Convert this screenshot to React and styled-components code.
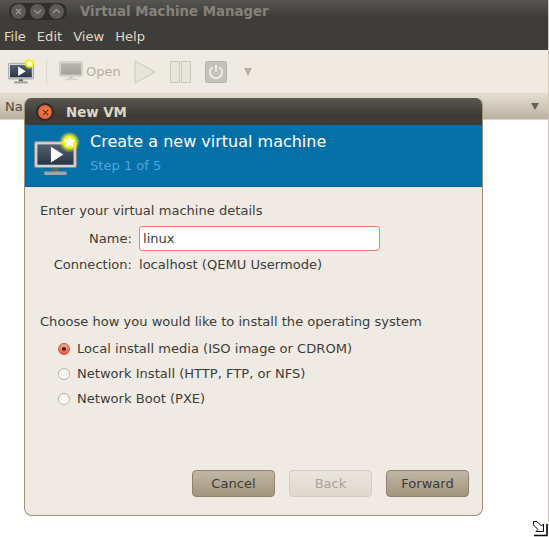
import React from "react";
import styled, { createGlobalStyle } from "styled-components";

const UI = `"DejaVu Sans", "Noto Sans", sans-serif`;
const BODY_SIZE = "13.07px";

const Global = createGlobalStyle`
  html, body { margin: 0; padding: 0; background: #fff; }
  body { font-family: ${UI}; font-size: ${BODY_SIZE}; color: #3c3b37; }
`;
const Desktop = styled.div`
  position: relative; width: 549px; height: 537px; overflow: hidden; background: #fff;
`;
const MainWindow = styled.div`
  display: flex; flex-direction: column; width: 549px; height: 521px;
  border-right: 1px solid #cfc6b4; box-sizing: border-box;
`;
const TitleBar = styled.div`
  height: 23px; display: flex; align-items: center; padding: 0 0 1px 9px; gap: 13px; box-sizing: border-box;
  background: linear-gradient(#575551, #3f3d39 70%);
`;
const WinButtons = styled.div`
  display: flex; align-items: center; gap: 4px; height: 17px; padding: 0 1px 0 2px; width: 58px; box-sizing: border-box;
  border-radius: 9px; background: #2f2e2b;
`;
const WinButton = styled.span`
  width: 15px; height: 15px; border-radius: 50%; background: #5d5b56; flex: none;
  display: flex; align-items: center; justify-content: center;
  svg { display: block; }
`;
const WinTitle = styled.div`
  font-weight: 700; font-size: 13.33px; color: #85827b;
`;
const MenuBar = styled.div`
  height: 27px; display: flex; align-items: center; padding-left: 4px; gap: 11px;
  background: #3f3d39; color: #dfd8c8; font-size: ${BODY_SIZE}; box-sizing: border-box;
`;
const Toolbar = styled.div`
  height: 44px; display: flex; align-items: center; background: #f0ebe2;
  border-bottom: 1px solid #e0d8ca; box-sizing: border-box; padding-left: 8px;
`;
const ToolSep = styled.div`
  width: 1px; height: 26px; background: #e3ddd1; margin: 0 12px 0 11px;
`;
const OpenLabel = styled.span`
  color: #b5ad9f; font-size: ${BODY_SIZE}; margin: 0 13px 0 3px;
`;
const ToolIcon = styled.span`
  display: flex; margin-right: ${p => p.$gap || 0}px;
  svg { display: block; }
`;
const HeaderRow = styled.div`
  height: 26px; display: flex; align-items: center; justify-content: space-between;
  padding: 0 8px 0 5px; box-sizing: border-box; color: #4c4a45; font-size: ${BODY_SIZE};
  background: linear-gradient(#e4ddd1, #bcb2a1); border-bottom: 1px solid #dcd5c8;
`;
const SortArrow = styled.span`
  width: 0; height: 0; border-left: 4px solid transparent; border-right: 4px solid transparent;
  border-top: 7px solid #66625a; margin-right: 1px;
`;
const ListArea = styled.div`
  flex: 1; background: #fff;
`;
const Dialog = styled.div`
  position: absolute; left: 24px; top: 98px; width: 459px; height: 418px;
  display: flex; flex-direction: column; box-sizing: border-box; overflow: hidden;
  border: 1px solid #9d917b; border-top: 0; border-radius: 7px 7px 8px 8px; background: #efebe4;
`;
const DialogTitle = styled.div`
  height: 27px; flex: none; display: flex; align-items: center; padding: 1px 0 0 11px; gap: 12px; box-sizing: border-box;
  background: linear-gradient(#5a5650, #3d3b37 65%);
`;
const CloseButton = styled.span`
  width: 14px; height: 14px; border-radius: 50%; border: 2px solid #2c2b28;
  background: radial-gradient(circle, #f08a60, #d9511f);
  display: flex; align-items: center; justify-content: center;
`;
const DialogName = styled.div`
  font-weight: 700; font-size: 13.33px; color: #dfd8c8;
`;
const Banner = styled.div`
  height: 62px; flex: none; display: flex; align-items: flex-start; background: #0570a8;
  padding: 0 0 0 9px; box-sizing: border-box; border-bottom: 1px solid #05608f;
`;
const BannerIcon = styled.div`
  width: 46px; height: 46px; margin: 7px 10px 0 0;
  svg { display: block; }
`;
const BannerText = styled.div`
  display: flex; flex-direction: column; padding-top: 6px;
`;
const BannerTitle = styled.div`
  color: #fff; font-size: 16px; line-height: 21px;
`;
const BannerStep = styled.div`
  color: #4fa3d8; font-size: ${BODY_SIZE}; line-height: 20px; margin-top: 4px;
`;
const Body = styled.div`
  flex: 1; display: flex; flex-direction: column; padding: 14px 15px 0 15px; position: relative;
`;
const Heading = styled.div`
  line-height: 20px; font-size: ${BODY_SIZE};
`;
const FormGrid = styled.div`
  display: grid; grid-template-columns: 92px 1fr; column-gap: 7px; row-gap: 1px; margin-top: 5px; align-items: center;
`;
const FieldLabel = styled.div`
  text-align: right; line-height: 20px; font-size: ${BODY_SIZE};
`;
const FieldValue = styled.div`
  line-height: 20px; height: 26px; display: flex; align-items: center; font-size: ${BODY_SIZE};
`;
const NameInput = styled.div`
  width: 241px; height: 25px; box-sizing: border-box; border: 1px solid #ee7f60; border-radius: 3px;
  background: #fff; padding-left: 3px; line-height: 23px; font-size: ${BODY_SIZE};
`;
const SecondHeading = styled(Heading)`
  margin-top: 34px;
`;
const RadioList = styled.div`
  display: flex; flex-direction: column; margin-top: 4px; padding-left: 18px;
`;
const RadioRow = styled.div`
  display: flex; align-items: center; height: 25px; gap: 7px; font-size: ${BODY_SIZE};
`;
const Radio = styled.span`
  width: 12px; height: 12px; border-radius: 50%; box-sizing: border-box; flex: none;
  display: flex; align-items: center; justify-content: center;
  border: 1px solid ${p => (p.$on ? "#c9553a" : "#b9b2a4")};
  background: ${p => (p.$on ? "linear-gradient(#f6a58c, #ea5f3f)" : "linear-gradient(#f4f2ee, #fff)")};
  &::after {
    content: ""; width: 4px; height: 4px; border-radius: 50%;
    background: ${p => (p.$on ? "#3c2a24" : "transparent")};
  }
`;
const Footer = styled.div`
  position: absolute; right: 13px; bottom: 18px; display: flex; gap: 14px;
`;
const Button = styled.div`
  width: 83px; height: 27px; box-sizing: border-box; border-radius: 4px; text-align: center;
  font-size: ${BODY_SIZE}; line-height: 26px;
  border: 1px solid ${p => (p.disabled ? "#d6cebf" : "#8f8370")};
  color: ${p => (p.disabled ? "#aaa499" : "#3c3b37")};
  background: ${p => (p.disabled ? "linear-gradient(#eae5dc, #dfd8cc)" : "linear-gradient(#c2b7a6, #a2957f)")};
`;
const Cursor = styled.svg`
  position: absolute; left: 532px; top: 520px; display: block;
`;
const SharedDefs = styled.svg`
  position: absolute; width: 0; height: 0;
`;

const Monitor = ({ disabled }) => (
  <>
    <rect x="0.5" y="0.5" width="37" height="23" rx="1.5" fill={disabled ? "#d8d6d0" : "#d3d5d6"} stroke={disabled ? "#c4c1ba" : "#8b8e90"} />
    <rect x="3" y="3" width="32" height="18" fill={disabled ? "url(#screen-off)" : "url(#screen-on)"} />
    {!disabled && <polygon points="15,5 15,19 26,12" fill="#fff" />}
    <rect x="16" y="24" width="6" height="3" fill={disabled ? "#c8c6c0" : "#62655f"} />
    <rect x="9" y="27" width="20" height="3" rx="1" fill={disabled ? "#d4d2cd" : "#a3a5a3"} />
  </>
);
const starPoints = (cx, cy, r) =>
  Array.from({ length: 10 }, (_, i) => {
    const a = -Math.PI / 2 + (i * Math.PI) / 5;
    const q = i % 2 ? r * 0.55 : r * 1.05;
    return `${(cx + q * Math.cos(a)).toFixed(2)},${(cy + q * Math.sin(a)).toFixed(2)}`;
  }).join(" ");
const Star = ({ cx, cy, r }) => (
  <>
    <circle cx={cx} cy={cy} r={r * 1.75} fill="url(#star-glow)" />
    <polygon fill="#fffff0" points={starPoints(cx, cy, r)} />
  </>
);
const Glyph = ({ d, c = "#a09d96" }) => (
  <svg width="9" height="9" viewBox="0 0 9 9">
    <path d={d} stroke={c} strokeWidth="1.2" fill="none" />
  </svg>
);

export default function App() {
  return (
    <Desktop>
      <Global />
      <SharedDefs aria-hidden="true">
        <defs>
          <linearGradient id="screen-on" x1="0" y1="0" x2="0" y2="1">
            <stop offset="0" stopColor="#55606f" />
            <stop offset="1" stopColor="#2a3548" />
          </linearGradient>
          <linearGradient id="screen-off" x1="0" y1="0" x2="0" y2="1">
            <stop offset="0" stopColor="#b8b6b0" />
            <stop offset="1" stopColor="#a4a29c" />
          </linearGradient>
          <radialGradient id="star-glow">
            <stop offset="0.55" stopColor="#f2f414" />
            <stop offset="1" stopColor="#e6e81c" stopOpacity="0" />
          </radialGradient>
        </defs>
      </SharedDefs>
      <MainWindow>
        <TitleBar>
          <WinButtons>
            <WinButton><Glyph d="M2 2 L7 7 M7 2 L2 7" /></WinButton>
            <WinButton><Glyph d="M1 3 L4.5 6.5 L8 3" /></WinButton>
            <WinButton><Glyph d="M1 6 L4.5 2.5 L8 6" /></WinButton>
          </WinButtons>
          <WinTitle>Virtual Machine Manager</WinTitle>
        </TitleBar>
        <MenuBar>
          <span>File</span><span>Edit</span><span>View</span><span>Help</span>
        </MenuBar>
        <Toolbar>
          <ToolIcon>
            <svg width="27" height="25" viewBox="0 0 27 25">
              <g transform="translate(0 4) scale(.68)"><Monitor /></g>
              <Star cx={21.5} cy={4.5} r={3.4} />
            </svg>
          </ToolIcon>
          <ToolSep />
          <ToolIcon>
            <svg width="24" height="21" viewBox="0 0 38 32"><Monitor disabled /></svg>
          </ToolIcon>
          <OpenLabel>Open</OpenLabel>
          <ToolIcon $gap={14}>
            <svg width="22" height="24" viewBox="0 0 22 24">
              <polygon points="1,1 1,23 21,12" fill="#e8e6da" stroke="#cbc9b8" />
            </svg>
          </ToolIcon>
          <ToolIcon $gap={14}>
            <svg width="21" height="22" viewBox="0 0 21 22">
              <rect x="0.5" y="0.5" width="9" height="21" fill="#e8e5dc" stroke="#cbc8bd" />
              <rect x="11.5" y="0.5" width="9" height="21" fill="#e8e5dc" stroke="#cbc8bd" />
            </svg>
          </ToolIcon>
          <ToolIcon $gap={17}>
            <svg width="22" height="22" viewBox="0 0 22 22">
              <rect x="0.5" y="0.5" width="21" height="21" rx="2" fill="#c5c2bb" stroke="#b5b2aa" />
              <path d="M7.5 6.5 A6 6 0 1 0 14.5 6.5" fill="none" stroke="#f0ede6" strokeWidth="2" />
              <path d="M11 4 V11" stroke="#f0ede6" strokeWidth="2" />
            </svg>
          </ToolIcon>
          <ToolIcon>
            <svg width="8" height="8" viewBox="0 0 8 8"><polygon points="0,0 8,0 4,8" fill="#b8b29f" /></svg>
          </ToolIcon>
        </Toolbar>
        <HeaderRow>
          <span>Na</span>
          <SortArrow />
        </HeaderRow>
        <ListArea />
      </MainWindow>

      <Dialog>
        <DialogTitle>
          <CloseButton><Glyph d="M2 2 L7 7 M7 2 L2 7" c="#7a2c10" /></CloseButton>
          <DialogName>New VM</DialogName>
        </DialogTitle>
        <Banner>
          <BannerIcon>
            <svg width="46" height="46" viewBox="0 0 46 46">
              <g transform="translate(0 9) scale(1.13)"><Monitor /></g>
              <Star cx={35.5} cy={10} r={6} />
            </svg>
          </BannerIcon>
          <BannerText>
            <BannerTitle>Create a new virtual machine</BannerTitle>
            <BannerStep>Step 1 of 5</BannerStep>
          </BannerText>
        </Banner>
        <Body>
          <Heading>Enter your virtual machine details</Heading>
          <FormGrid>
            <FieldLabel>Name:</FieldLabel>
            <NameInput>linux</NameInput>
            <FieldLabel>Connection:</FieldLabel>
            <FieldValue>localhost (QEMU Usermode)</FieldValue>
          </FormGrid>
          <SecondHeading>Choose how you would like to install the operating system</SecondHeading>
          <RadioList>
            <RadioRow><Radio $on />Local install media (ISO image or CDROM)</RadioRow>
            <RadioRow><Radio />Network Install (HTTP, FTP, or NFS)</RadioRow>
            <RadioRow><Radio />Network Boot (PXE)</RadioRow>
          </RadioList>
          <Footer>
            <Button>Cancel</Button>
            <Button disabled>Back</Button>
            <Button>Forward</Button>
          </Footer>
        </Body>
      </Dialog>
      <Cursor width="17" height="17" viewBox="0 0 17 17">
        <path d="M1.5 1.5 H5 L9.5 6 L11.5 4 V11.5 H4 L6 9.5 L1.5 5 Z" fill="#fff" stroke="#000" />
        <path d="M15 4 V15.5 H2" fill="none" stroke="#000" strokeWidth="1.6" />
      </Cursor>
    </Desktop>
  );
}
